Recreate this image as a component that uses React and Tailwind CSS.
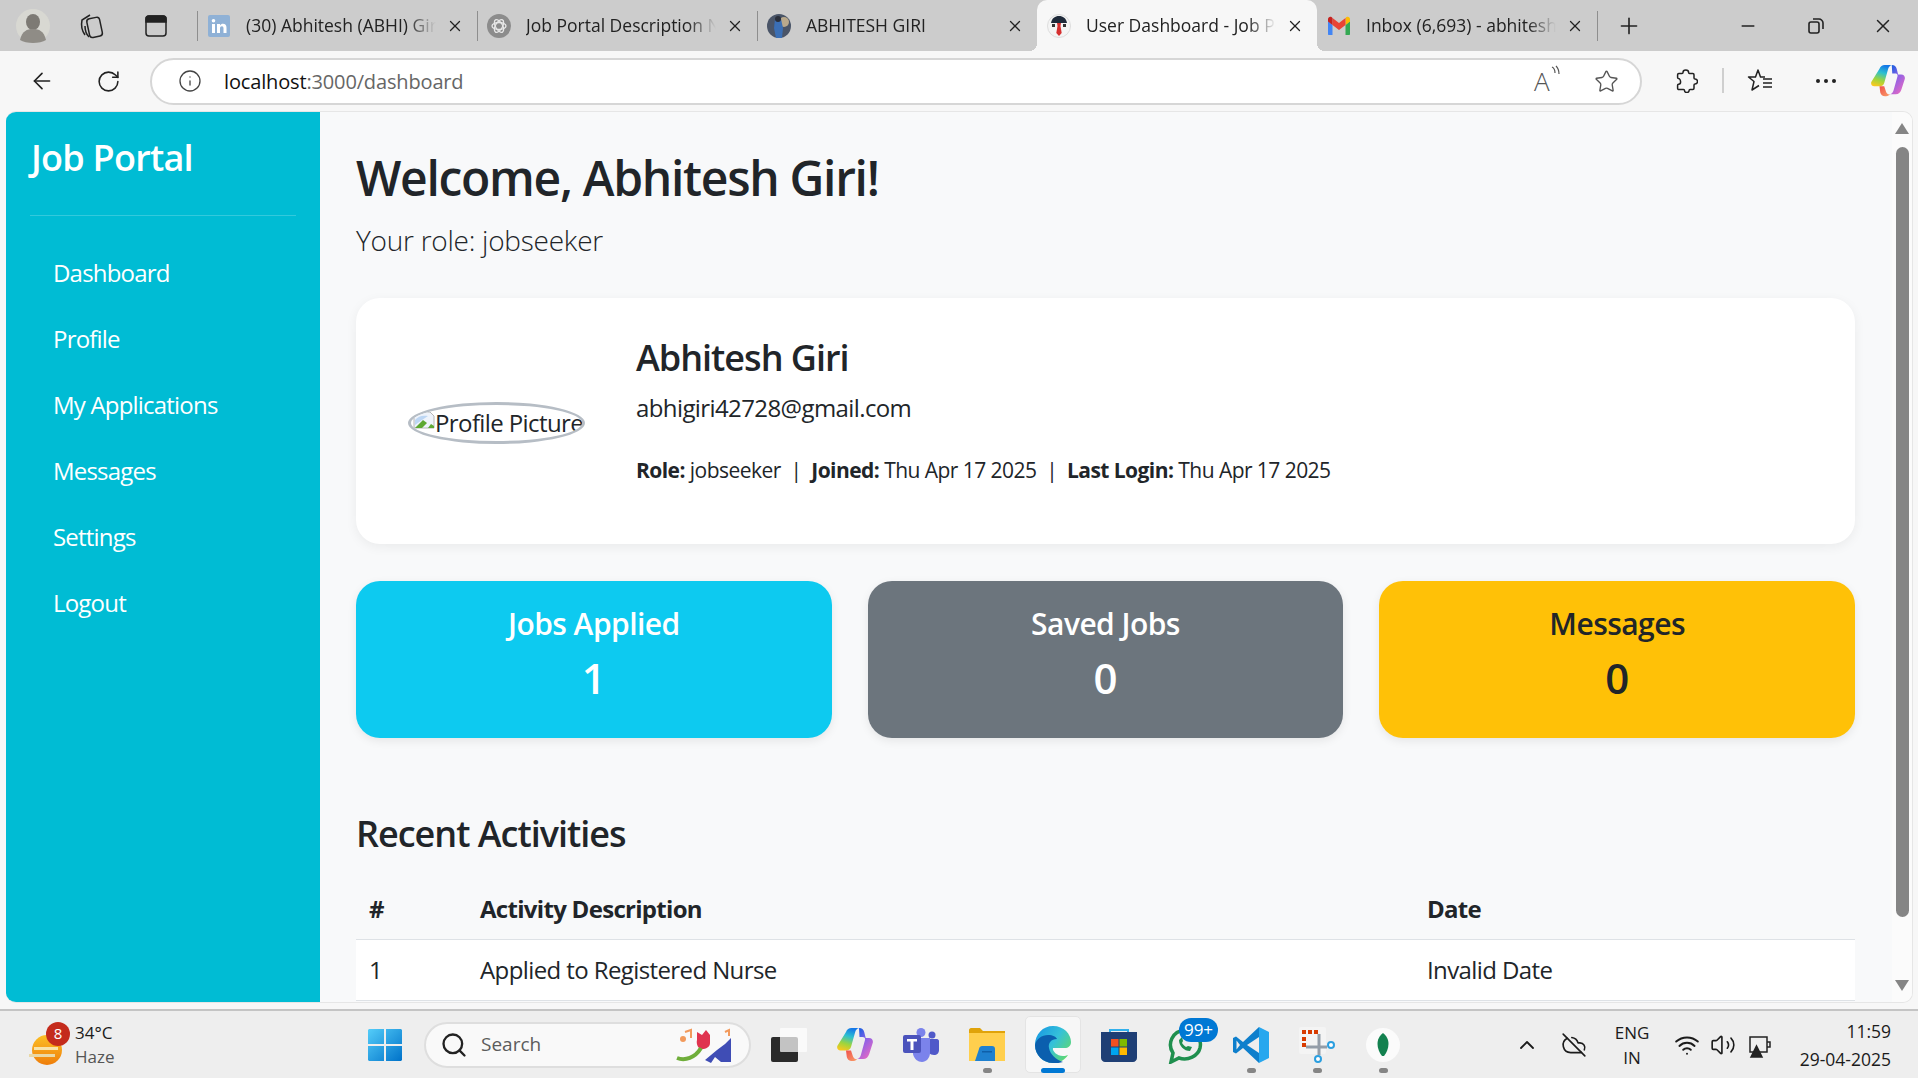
import { ArrowLeft, RotateCw, Info, Star, Plus, Minus, X, Search, ChevronUp, Wifi, Volume2, CloudOff } from "lucide-react";

const tabs = [
  { title: "(30) Abhitesh (ABHI) Giri | LinkedIn", icon: "in" },
  { title: "Job Portal Description Need", icon: "gpt" },
  { title: "ABHITESH GIRI", icon: "me" },
  { title: "User Dashboard - Job Portal", icon: "job", active: true },
  { title: "Inbox (6,693) - abhitesh@gmail", icon: "gmail", noSep: true },
];

const navItems = ["Dashboard", "Profile", "My Applications", "Messages", "Settings", "Logout"];

const stats = [
  { label: "Jobs Applied", value: 1, cls: "bg-[#0dcaf0] text-white" },
  { label: "Saved Jobs", value: 0, cls: "bg-[#6c757d] text-white" },
  { label: "Messages", value: 0, cls: "bg-[#ffc107] text-[#212529]" },
];

function Favicon({ type }) {
  if (type === "in") {
    return (
      <svg width="22" height="22" viewBox="0 0 22 22">
        <rect width="22" height="22" rx="2" fill="#8fb1d6" />
        <rect x="4" y="9" width="3" height="9" fill="#fff" />
        <circle cx="5.5" cy="5.8" r="1.8" fill="#fff" />
        <path d="M9 9h3v1.4c.7-1 1.7-1.6 3-1.6 2.3 0 3.5 1.4 3.5 4V18h-3v-4.7c0-1.3-.5-2-1.6-2s-1.9.8-1.9 2V18H9z" fill="#fff" />
      </svg>
    );
  }
  if (type === "gpt") {
    return (
      <svg width="24" height="24" viewBox="0 0 24 24">
        <circle cx="12" cy="12" r="12" fill="#8c8c8c" />
        <g fill="none" stroke="#e8e8e8" strokeWidth="1.3">
          <ellipse cx="12" cy="12" rx="7" ry="3.5" />
          <ellipse cx="12" cy="12" rx="7" ry="3.5" transform="rotate(60 12 12)" />
          <ellipse cx="12" cy="12" rx="7" ry="3.5" transform="rotate(120 12 12)" />
        </g>
      </svg>
    );
  }
  if (type === "me") {
    return (
      <svg width="24" height="24" viewBox="0 0 24 24">
        <circle cx="12" cy="12" r="12" fill="#4a5568" />
        <circle cx="17" cy="8" r="5" fill="#b9a98c" />
        <path d="M8 5h6l2 9-1 10H9L7 14z" fill="#3b6fb5" />
        <circle cx="11" cy="5" r="3" fill="#2a2f3a" />
      </svg>
    );
  }
  if (type === "job") {
    return (
      <svg width="24" height="24" viewBox="0 0 24 24">
        <circle cx="12" cy="12" r="11.5" fill="#f4f4f4" stroke="#ddd" />
        <path d="M4 9c1-5 4-7 8-7s7 2 8 7z" fill="#1f2a3a" />
        <path d="M10 9h4l-.5 3 1.2 7L12 22l-2.7-3 1.2-7z" fill="#d62f2f" />
        <path d="M5 10h3v3H5zM16 10h3v3h-3z" fill="#333" />
      </svg>
    );
  }
  return (
    <svg width="24" height="20" viewBox="0 0 24 20">
      <path d="M1 5v13c0 .6.4 1 1 1h3.500V9z" fill="#4285f4" />
      <path d="M23 5v13c0 .6-.4 1-1 1h-3.500V9z" fill="#34a853" />
      <path d="M18.500 2v7L23 5.500V3c0-2-2.200-3-3.500-1.900z" fill="#fbbc04" />
      <path d="M5.500 9V2L12 7l6.500-5v7L12 14z" fill="#ea4335" />
      <path d="M1 3v2.500L5.500 9V2L4.500 1.100C3.200 0 1 1 1 3z" fill="#c5221f" />
    </svg>
  );
}

function Tab({ tab }) {
  return (
    <div
      className={
        "relative flex h-[51px] w-[280px] items-center pl-[10px] pr-[13px] " +
        (tab.active ? "rounded-t-[10px] bg-[#f7f7f7]" : "")
      }
    >
      {!tab.active && !tab.noSep && <div className="absolute left-0 top-[11px] h-[30px] w-px bg-[#8e8e8e]" />}
      {tab.active && (
        <>
          <div className="absolute -left-[8px] bottom-0 h-[8px] w-[8px] bg-[radial-gradient(circle_at_0_0,transparent_8px,#f7f7f7_8px)]" />
          <div className="absolute -right-[8px] bottom-0 h-[8px] w-[8px] bg-[radial-gradient(circle_at_100%_0,transparent_8px,#f7f7f7_8px)]" />
        </>
      )}
      <div className="flex w-[24px] shrink-0 justify-center">
        <Favicon type={tab.icon} />
      </div>
      <span className="ml-[15px] w-[190px] overflow-hidden whitespace-nowrap text-[17.5px] text-[#222] [mask-image:linear-gradient(to_right,black_85%,transparent)]">
        {tab.title}
      </span>
      <X className="ml-auto text-[#222]" size={18} strokeWidth={1.7} />
    </div>
  );
}

function CopilotLogo({ className, size, id }) {
  return (
    <svg className={className} width={size} height={size * 0.92} viewBox="0 0 36 33">
      <defs>
        <linearGradient id={id + "A"} x1="0.6" y1="0" x2="0.3" y2="1">
          <stop offset="0" stopColor="#1477e8" />
          <stop offset="0.35" stopColor="#2cc0d0" />
          <stop offset="0.7" stopColor="#9ed53c" />
          <stop offset="1" stopColor="#f7c81f" />
        </linearGradient>
        <linearGradient id={id + "B"} x1="0.2" y1="0" x2="0.8" y2="1">
          <stop offset="0" stopColor="#1d5fe0" />
          <stop offset="0.4" stopColor="#8a62e8" />
          <stop offset="1" stopColor="#ee6ac0" />
        </linearGradient>
        <linearGradient id={id + "C"} x1="0" y1="0" x2="1" y2="1">
          <stop offset="0" stopColor="#f0504a" />
          <stop offset="1" stopColor="#f9a06a" />
        </linearGradient>
      </defs>
      <path d="M9 4c.8-2.500 3-4 5.500-4H22c-2 .6-3.200 2-3.800 4L14 19c-.7 2.300-2.500 3.500-4.500 3.500H3.500C1 22.500-.4 20.500.3 18z" fill={"url(#" + id + "A)"} />
      <path d="M22 0c3 0 4.500 1.500 5.200 4l1.500 6H32c3 0 4.500 2.500 3.700 5l-3.500 11c-1 3-3 5-6 5h-6c2-.6 3.200-2 3.800-4.500L28 12c.5-2-.5-3-2.500-3h-3z" fill={"url(#" + id + "B)"} />
      <path d="M9 22.500h5l2 6c.8 2 2.500 3 4.200 2.500-1 1-2 2-4.200 2h-1c-3 0-4.500-1.500-5.200-4z" fill={"url(#" + id + "C)"} />
    </svg>
  );
}

function ToolbarIcons() {
  return (
    <div className="ml-[32px] flex items-center text-[#222]">
      <svg width="24" height="24" viewBox="0 0 24 24" fill="none" stroke="#222" strokeWidth="1.5" strokeLinejoin="round">
        <path d="M9 3.500C9 2 10.300 1 11.800 1s2.800 1 2.800 2.500c0 .8.400 1 1 1h3.200c.7 0 1.200.5 1.200 1.200V9c0 .6.300 1 1 1 1.300 0 2.500 1 2.500 2.400s-1.200 2.500-2.500 2.500c-.7 0-1 .4-1 1v3.400c0 .7-.5 1.200-1.200 1.200h-2.700c-.6 0-1 .4-1 1 0 1.200-1 2-2.300 2s-2.300-.8-2.300-2c0-.6-.4-1-1-1H4.800c-.7 0-1.200-.5-1.200-1.200v-3c0-.6.400-.9 1-1 1.200-.1 2-1 2-2.300S5.800 9.700 4.600 9.600c-.6-.1-1-.4-1-1V5.700c0-.7.500-1.200 1.200-1.200H8c.6 0 1-.4 1-1z" />
      </svg>
      <div className="ml-[24px] h-[25px] w-[2px] bg-[#cfcfcf]" />
      <svg className="ml-[23px]" width="26" height="26" viewBox="0 0 26 26" fill="none" stroke="#222" strokeWidth="1.5">
        <path d="M18 9h-4.500L11 2 8.500 9H1.500L7 13.500 5 22l7-4.500" strokeLinejoin="round" />
        <path d="M16 11h9M16 15h9M16 19h9" />
      </svg>
      <div className="ml-[43px] flex w-[20px] justify-between">
        <span className="h-[4px] w-[4px] rounded-full bg-[#222]" />
        <span className="h-[4px] w-[4px] rounded-full bg-[#222]" />
        <span className="h-[4px] w-[4px] rounded-full bg-[#222]" />
      </div>
      <CopilotLogo className="ml-[35px]" size={34} id="cpTop" />
    </div>
  );
}

function BrokenImage() {
  return (
    <svg className="mb-[6px] ml-[2px] shrink-0" width="22" height="18" viewBox="0 0 22 18">
      <path d="M1 1h16l4 4v12H1z" fill="#eef3fb" stroke="#b6b6b6" />
      <path d="M2 17l8-8 4 3-5 5z" fill="#5da832" />
      <path d="M15 17l3-4 3 2v2z" fill="#5da832" />
      <path d="M2 9c3-4 8-5 13-4l-6 4-7 5z" fill="#bcd6f4" />
    </svg>
  );
}

function TaskIcon({ children, dot, active }) {
  return (
    <div className="relative flex h-[57px] w-[66px] items-center justify-center">
      {active && <div className="absolute inset-y-0 left-[5px] right-[5px] rounded-[5px] border border-[#e4e4e4] bg-[#f7f7f7]" />}
      <div className="relative flex">{children}</div>
      {dot && <div className="absolute bottom-0 h-[5px] w-[9px] rounded-full bg-[#858585]" />}
      {active && <div className="absolute bottom-0 h-[5px] w-[24px] rounded-full bg-[#0078d4]" />}
    </div>
  );
}

function Taskbar() {
  return (
    <div className="flex h-[69px] items-center border-t-2 border-[#c4c4c4] bg-[#eeeeee] text-[#1b1b1b]">
      {/* weather */}
      <div className="flex w-[368px] shrink-0 items-center pl-[29px]">
        <div className="relative h-[40px] w-[36px]">
          <div className="absolute bottom-0 left-[3px] h-[30px] w-[30px] rounded-full bg-gradient-to-b from-[#fbbf24] to-[#ee7d0a]" />
          <div className="absolute bottom-[8px] left-0 h-[3px] w-[26px] bg-[#e9d8a6]" />
          <div className="absolute bottom-[15px] left-[5px] h-[3px] w-[24px] bg-[#f8e3a8]" />
          <div className="absolute -right-[5px] -top-[3px] flex h-[24px] w-[24px] items-center justify-center rounded-full bg-[#c42b1c] text-[15px] text-white">
            8
          </div>
        </div>
        <div className="ml-[10px] text-[17px] leading-[24px]">
          <div>34°C</div>
          <div className="text-[#555]">Haze</div>
        </div>
      </div>

      <svg width="34" height="36" viewBox="0 0 34 36">
        <defs>
          <linearGradient id="win" x1="0" y1="0" x2="1" y2="1">
            <stop offset="0" stopColor="#54cdf9" />
            <stop offset="1" stopColor="#0072c9" />
          </linearGradient>
        </defs>
        <path d="M1 2h15v15H0V3zM18 2h15l1 1v14H18zM0 19h16v15H1l-1-1zM18 19h16v14l-1 1H18z" fill="url(#win)" />
      </svg>

      <div className="ml-[22px] flex h-[46px] w-[327px] items-center rounded-full border-2 border-[#dedede] bg-[#f9f9f9] pl-[14px]">
        <Search size={28} strokeWidth={2} className="text-[#222]" />
        <span className="ml-[13px] text-[19px] text-[#5c5c5c]">Search</span>
        <svg className="ml-auto mr-[10px]" width="64" height="38" viewBox="0 0 64 38">
          <path d="M10 6l6-2v8" fill="none" stroke="#f29a5c" strokeWidth="2" />
          <circle cx="8" cy="13" r="3" fill="#f29a5c" />
          <path d="M22 6l5 3 4-5 4 5v8c0 4-4 6-8 6s-6-5-5-9z" fill="#e0344f" />
          <path d="M2 32c8 3 18 0 24-10" fill="none" stroke="#6fae3a" strokeWidth="4" />
          <path d="M30 34l12-10 8-6 6-6v24H46l-6-5-4 6z" fill="#3f4db5" />
          <path d="M50 6l4-2v6" fill="none" stroke="#f29a5c" strokeWidth="2" />
        </svg>
      </div>

      <div className="ml-[5px] flex items-center">
        <TaskIcon>
          <svg width="36" height="34" viewBox="0 0 36 34">
            <rect x="0" y="9" width="27" height="25" rx="2" fill="#2a2a2a" />
            <rect x="9" y="0" width="27" height="24" rx="1" fill="#ffffff" fillOpacity="0.72" />
          </svg>
        </TaskIcon>
        <TaskIcon><CopilotLogo size={36} id="cpBar" /></TaskIcon>
        <TaskIcon>
          <svg width="36" height="34" viewBox="0 0 36 34">
            <circle cx="18" cy="4.500" r="4.500" fill="#7b83eb" />
            <circle cx="29" cy="7" r="3.500" fill="#5059c9" />
            <path d="M25 11h9c1 0 2 1 2 2v9c0 3-2 5-5 5-2 0-4-1-5-2z" fill="#5059c9" />
            <path d="M10 10h17v15c0 5-4 9-8 9s-8-3-9-8z" fill="#7b83eb" />
            <rect x="0" y="7" width="18" height="18" rx="2" fill="#4b53bc" />
            <path d="M4 11h10v2.500h-3.500V22h-3v-8.500H4z" fill="#fff" />
          </svg>
        </TaskIcon>
        <TaskIcon dot>
          <svg width="36" height="33" viewBox="0 0 36 33">
            <path d="M0 4h36v29H0z" fill="#ffcf4d" />
            <path d="M0 2c0-1 1-2 2-2h9l3 3h22v2H0z" fill="#e0a30a" />
            <path d="M10 21c0-2 2-3 3-3h10c2 0 3 1 3 3v12H6z" fill="#1e80cf" />
            <rect x="13" y="23" width="10" height="1.500" fill="#0f5fa8" />
          </svg>
        </TaskIcon>
        <TaskIcon active>
          <svg width="36" height="37" viewBox="0 0 36 37">
            <defs>
              <linearGradient id="edgeA" x1="0.1" y1="0.1" x2="1" y2="0.7">
                <stop offset="0" stopColor="#1b9de2" />
                <stop offset="0.5" stopColor="#35c1d9" />
                <stop offset="1" stopColor="#5fd86f" />
              </linearGradient>
            </defs>
            <path d="M0 19C0 8 8 0 18 0c11 0 18 8 18 16 0 4-3 6-6 6H18c-1 3 4 8 10 8 2 0 4-.5 5-1-3 5-9 8-15 8C8 37 0 29 0 19z" fill="url(#edgeA)" />
            <path d="M0 19c1-6 7-10 13-10 5 0 8 2 9 4-6 0-9 4-8 9 1 6 7 12 14 14-3 1-6 1-10 1C8 37 0 29 0 19z" fill="#0b5fae" />
          </svg>
        </TaskIcon>
        <TaskIcon>
          <svg width="36" height="34" viewBox="0 0 36 34">
            <path d="M9 5V2h18v3" fill="none" stroke="#32b0ec" strokeWidth="2" />
            <path d="M0 4h36v26c0 2-2 4-4 4H4c-2 0-4-2-4-4z" fill="#1f3f75" />
            <rect x="10" y="11" width="7.500" height="7.500" fill="#f25022" />
            <rect x="18.500" y="11" width="7.500" height="7.500" fill="#7fba00" />
            <rect x="10" y="19.500" width="7.500" height="7.500" fill="#00a4ef" />
            <rect x="18.500" y="19.500" width="7.500" height="7.500" fill="#ffb900" />
          </svg>
        </TaskIcon>
        <TaskIcon>
          <svg width="36" height="38" viewBox="0 0 36 38" fill="none">
            <path d="M4 36l2-9C0 18 5 5 18 4c12 0 17 9 15 18-2 8-12 13-21 10z" stroke="#1f8f4e" strokeWidth="3.5" />
            <path d="M12 14c0 6 5 11 11 11l2-4-4-1-2 1c-2-1-3-3-4-4l1-2-1-4z" fill="#1f8f4e" />
          </svg>
          <div className="absolute -right-[15px] -top-[8px] flex h-[24px] w-[39px] items-center justify-center rounded-[12px] bg-[#0078d4] text-[17px] text-white">
            99+
          </div>
        </TaskIcon>
        <TaskIcon dot>
          <svg width="36" height="36" viewBox="0 0 36 36">
            <path d="M26 0L10 15 3 9.500 0 11v14l3 1.500L10 21l16 15z" fill="#0e7fcc" />
            <path d="M26 0l10 5v26l-10 5z" fill="#27a7ee" />
            <path d="M26 10l-12 8 12 8z" fill="#eeeeee" />
            <path d="M3.500 13.500L7 18l-3.500 4.500z" fill="#eeeeee" />
          </svg>
        </TaskIcon>
        <TaskIcon dot>
          <svg width="36" height="36" viewBox="0 0 36 36">
            <rect x="0" y="0" width="27" height="27" rx="2" fill="#f4f4f4" />
            <path d="M3 3h4v4H3zM9 3h4v4H9zM15 3h4v4h-4zM3 10h4v4H3zM3 16h4v4H3z" fill="#d83b01" />
            <path d="M20 7v21M7 20h21" stroke="#949da8" strokeWidth="3" />
            <circle cx="32" cy="18" r="3" fill="#fff" stroke="#2b9fe0" strokeWidth="2" />
            <circle cx="19" cy="32" r="3" fill="#fff" stroke="#2b9fe0" strokeWidth="2" />
          </svg>
        </TaskIcon>
        <TaskIcon dot>
          <svg width="34" height="34" viewBox="0 0 34 34">
            <circle cx="17" cy="17" r="17" fill="#fbfbfb" />
            <path d="M17 5c4 3 5.500 7 5.500 11s-2 9-4.500 12h-2c-2.500-3-4.500-8-4.500-12S13 8 17 5z" fill="#13814f" />
          </svg>
        </TaskIcon>
      </div>

      {/* tray */}
      <div className="ml-auto flex items-center pr-[27px]">
        <ChevronUp size={24} strokeWidth={1.8} />
        <CloudOff className="ml-[22px]" size={26} strokeWidth={1.5} />
        <div className="ml-[23px] w-[44px] text-center text-[17px] leading-[25px]">
          <div>ENG</div>
          <div>IN</div>
        </div>
        <Wifi className="ml-[20px]" size={26} strokeWidth={1.8} />
        <Volume2 className="ml-[10px]" size={26} strokeWidth={1.5} />
        <svg className="ml-[10px]" width="26" height="26" viewBox="0 0 26 26" fill="none" stroke="#222" strokeWidth="1.5">
          <rect x="4" y="5" width="17" height="15" />
          <path d="M21 10h3v5h-3" />
          <path d="M5 25l5.500-11L16 25z" fill="#222" />
        </svg>
        <div className="ml-[9px] w-[110px] text-right text-[17.5px] leading-[28px]">
          <div>11:59</div>
          <div>29-04-2025</div>
        </div>
      </div>
    </div>
  );
}

export default function App() {
  return (
    <div className="flex h-[1078px] w-[1918px] flex-col overflow-hidden bg-[#f7f7f7] font-['Open_Sans',sans-serif]">
      {/* tab strip */}
      <div className="flex h-[51px] shrink-0 items-center bg-[#cccccc]">
        <div className="flex w-[197px] items-center">
          <svg className="ml-[16px]" width="34" height="34" viewBox="0 0 34 34">
            <circle cx="17" cy="17" r="17" fill="#d8d8d2" />
            <ellipse cx="17" cy="13" rx="7" ry="8" fill="#7d7a74" />
            <path d="M4 31c2-9 7-11 13-11s11 2 13 11c-3 2-8 3-13 3S7 33 4 31z" fill="#8f8c86" />
          </svg>
          <svg className="ml-[28px]" width="26" height="28" viewBox="0 0 26 28" fill="none" stroke="#222" strokeWidth="1.5">
            <rect x="10" y="6" width="13" height="19" rx="3" transform="rotate(-12 16 15)" />
            <path d="M7 23C4 19 3 13 4 8l8-5M11 25c-2-2-4-6-4-11" />
          </svg>
          <svg className="ml-[40px]" width="24" height="24" viewBox="0 0 24 24" fill="none" stroke="#222" strokeWidth="1.5">
            <rect x="2" y="2" width="20" height="20" rx="3" />
            <path d="M2 8h20V5c0-2-1-3-3-3H5C3 2 2 3 2 5z" fill="#222" />
          </svg>
        </div>
        {tabs.map((t) => (
          <Tab key={t.icon} tab={t} />
        ))}
        <div className="h-[30px] w-px bg-[#8e8e8e]" />
        <Plus className="ml-[18px] text-[#222]" size={26} strokeWidth={1.5} />
        <div className="ml-auto flex items-center pr-[24px] text-[#222]">
          <Minus size={20} strokeWidth={1.8} />
          <svg className="ml-[49px]" width="18" height="18" viewBox="0 0 18 18" fill="none" stroke="#222" strokeWidth="1.6">
            <rect x="2" y="5" width="10" height="11" rx="2" />
            <path d="M6 2h6c2 0 4 2 4 4v6" />
          </svg>
          <X className="ml-[47px]" size={22} strokeWidth={1.6} />
        </div>
      </div>

      {/* address bar */}
      <div className="flex h-[60px] shrink-0 items-center pl-[29px]">
        <ArrowLeft size={26} strokeWidth={1.5} className="text-[#222]" />
        <RotateCw size={25} strokeWidth={1.5} className="ml-[41px] text-[#222]" />
        <div className="ml-[29px] flex h-[47px] w-[1492px] items-center rounded-full border-2 border-[#d6d6d6] bg-white pl-[26px] pr-[21px]">
          <Info size={24} strokeWidth={1.3} className="text-[#444]" />
          <span className="ml-[22px] mt-[1px] text-[20px] tracking-[-0.15px] text-[#111]">
            localhost<span className="text-[#666]">:3000/dashboard</span>
          </span>
          <div className="ml-auto flex items-center">
            <div className="relative flex w-[26px] items-center text-[26px] font-light leading-none text-[#555]">
              <span>A</span>
              <svg className="absolute -right-[2px] -top-[3px]" width="12" height="16" viewBox="0 0 12 16" fill="none" stroke="#555" strokeWidth="1.2">
                <path d="M2 2c2 1 3 3 3 6M6 1c2 2 3 4 3 8" />
              </svg>
            </div>
            <Star className="ml-[34px] text-[#555]" size={25} strokeWidth={1.3} />
          </div>
        </div>
        <ToolbarIcons />
      </div>

      {/* page */}
      <div className="flex h-[892px] shrink-0 pl-[6px]">
        <div className="flex h-full w-[1907px] overflow-hidden rounded-[10px] border-y border-r border-[#e6e6e6]">
          <aside className="w-[314px] shrink-0 bg-[#00bcd4] px-[24px] text-white">
            <div className="border-b border-[#ffffff33] pb-[35px] pl-[1px] pt-[24px] text-[36px] font-semibold leading-[44px] tracking-[-0.75px]">Job Portal</div>
            <nav className="mt-[24px]">
              {navItems.map((item) => (
                <div key={item} className="flex h-[66px] items-center pl-[23px] text-[24px] tracking-[-0.8px]">
                  {item}
                </div>
              ))}
            </nav>
          </aside>

          <main className="h-full w-[1572px] shrink-0 overflow-hidden bg-[#f8f9fa] pl-[36px] pr-[37px] text-[#212529]">
            <h1 className="pt-[33px] text-[48px] font-semibold leading-[66px] tracking-[-1.3px]">Welcome, Abhitesh Giri!</h1>
            <p className="mt-[8px] text-[28px] font-light leading-[42px] tracking-[-0.25px]">Your role: jobseeker</p>

            <section className="mt-[37px] flex h-[246px] items-center rounded-[24px] bg-white pl-[52px] shadow-[0_3px_12px_rgba(0,0,0,0.06)]">
              <div className="mt-[3px] flex h-[42px] w-[177px] shrink-0 items-center overflow-hidden whitespace-nowrap rounded-[50%] border-[3px] border-[#b6bdc5] text-[24px] tracking-[-0.6px]">
                <BrokenImage />
                <span>Profile Picture</span>
              </div>
              <div className="ml-[51px] pb-[22px]">
                <h2 className="text-[36px] font-semibold leading-[48px] tracking-[-1px]">Abhitesh Giri</h2>
                <p className="mt-[8px] text-[24px] leading-[36px] tracking-[-0.6px]">abhigiri42728@gmail.com</p>
                <p className="mt-[28px] text-[21px] leading-[32px] tracking-[-0.55px]">
                  <b className="font-bold">Role:</b> jobseeker &nbsp;|&nbsp; <b className="font-bold">Joined:</b> Thu Apr 17 2025 &nbsp;|&nbsp; <b className="font-bold">Last Login:</b> Thu Apr 17 2025
                </p>
              </div>
            </section>

            <section className="mt-[37px] grid grid-cols-3 gap-[36px]">
              {stats.map((s) => (
                <div key={s.label} className={"flex h-[157px] flex-col items-center justify-center rounded-[24px] pb-[12px] shadow-[0_3px_10px_rgba(0,0,0,0.08)] " + s.cls}>
                  <div className="text-[30px] font-semibold leading-[44px] tracking-[-0.55px]">{s.label}</div>
                  <div className="mt-[4px] text-[42px] font-semibold leading-[56px]">{s.value}</div>
                </div>
              ))}
            </section>

            <h3 className="mt-[71px] text-[36px] font-semibold leading-[50px] tracking-[-1px]">Recent Activities</h3>

            <table className="mt-[21px] w-full text-left text-[24px] tracking-[-0.6px]">
              <thead>
                <tr className="h-[59px] border-b border-[#dee2e6]">
                  <th className="w-[124px] pl-[13px] font-bold tracking-[-0.7px]">#</th>
                  <th className="w-[947px] font-bold tracking-[-0.7px]">Activity Description</th>
                  <th className="font-bold tracking-[-0.7px]">Date</th>
                </tr>
              </thead>
              <tbody className="bg-white">
                <tr className="h-[61px] border-b border-[#dee2e6]">
                  <td className="pl-[13px]">1</td>
                  <td>Applied to Registered Nurse</td>
                  <td>Invalid Date</td>
                </tr>
              </tbody>
            </table>
          </main>

          {/* scrollbar */}
          <div className="flex w-[20px] shrink-0 flex-col items-center bg-[#fbfbfb]">
            <div className="mt-[11px] h-0 w-0 border-x-[7px] border-b-[11px] border-x-transparent border-b-[#858585]" />
            <div className="mt-[13px] h-[770px] w-[13px] rounded-full bg-[#858585]" />
            <div className="mt-[63px] h-0 w-0 border-x-[7px] border-t-[11px] border-x-transparent border-t-[#858585]" />
          </div>
        </div>
      </div>

      <div className="h-[6px] shrink-0" />
      <Taskbar />
    </div>
  );
}
